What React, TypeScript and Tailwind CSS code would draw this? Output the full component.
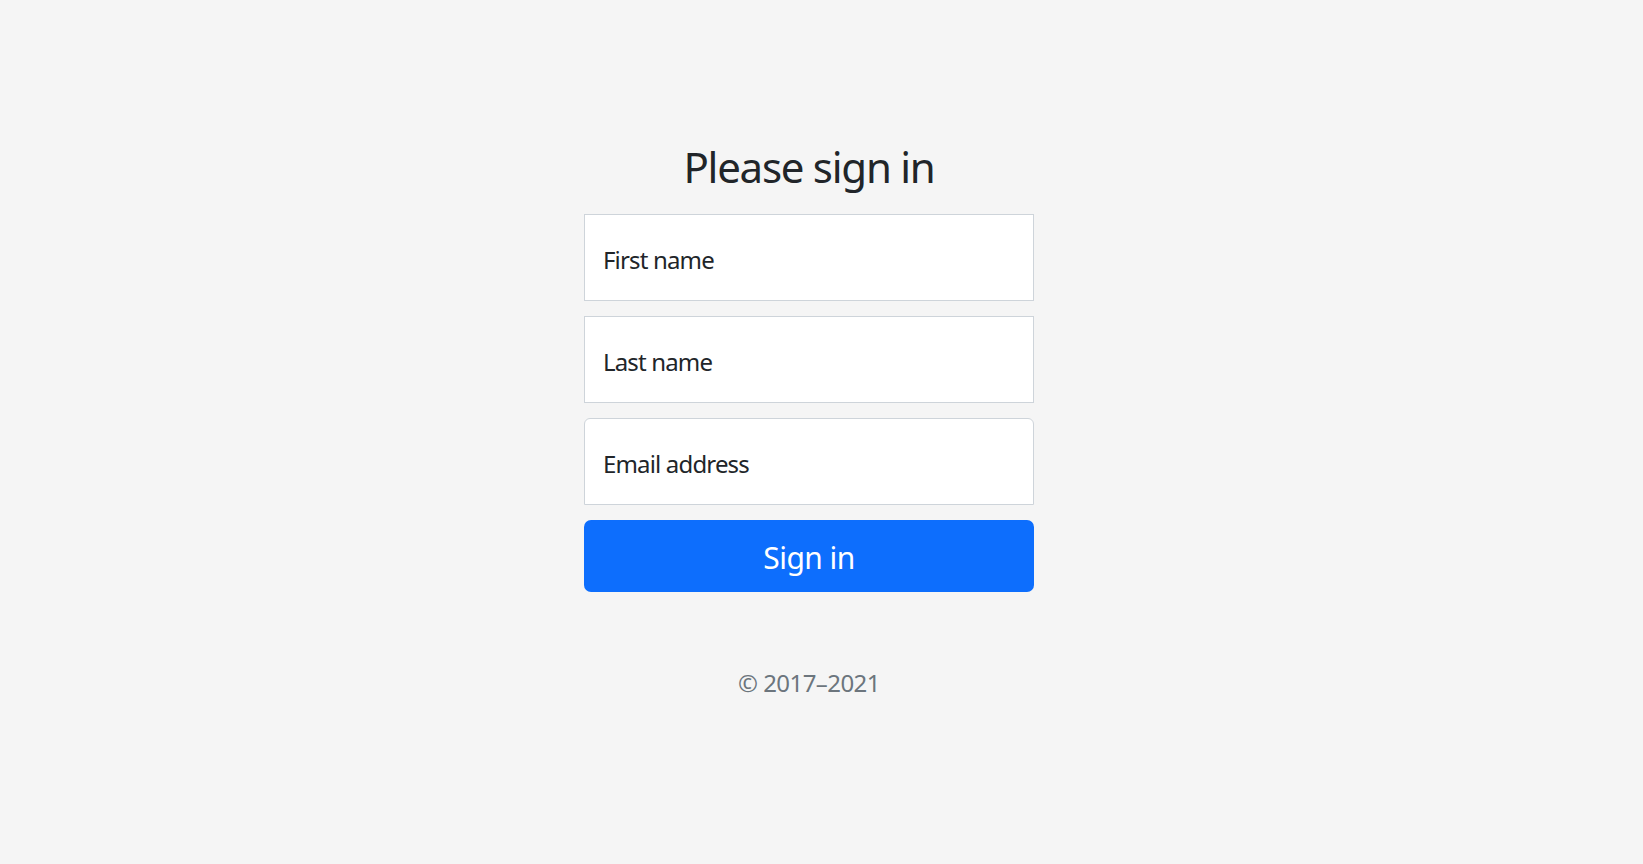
export default function App() {
  const fields = [
    { placeholder: "First name", type: "text", rounded: "" },
    { placeholder: "Last name", type: "text", rounded: "" },
    { placeholder: "Email address", type: "email", rounded: "rounded-t-[6px]" },
  ];

  return (
    <div className="min-h-screen bg-[#f5f5f5] flex justify-center pr-[25px] font-['Noto_Sans',sans-serif] tracking-[-0.035em]">
      <form className="w-[450px] pt-[142px] flex flex-col" onSubmit={(e) => e.preventDefault()}>
        <h1 className="text-[42px] leading-[50px] font-normal tracking-[-0.03em] text-center text-[#212529] mb-[22px]">
          Please sign in
        </h1>
        <div className="flex flex-col gap-[15px]">
          {fields.map((f) => (
            <input
              key={f.placeholder}
              type={f.type}
              placeholder={f.placeholder}
              className={`h-[87px] w-full bg-white border-[1.5px] border-[#ced4da] px-[18px] pt-[4px] text-[24px] tracking-[-0.035em] text-[#212529] placeholder:text-[#212529] outline-none ${f.rounded}`}
            />
          ))}
          <button
            type="submit"
            className="h-[72px] w-full rounded-[7px] bg-[#0d6efd] pt-[2px] text-white text-[30px]"
          >
            Sign in
          </button>
        </div>
        <p className="mt-[73px] text-center text-[24px] leading-[36px] text-[#6c757d]">© 2017–2021</p>
      </form>
    </div>
  );
}
